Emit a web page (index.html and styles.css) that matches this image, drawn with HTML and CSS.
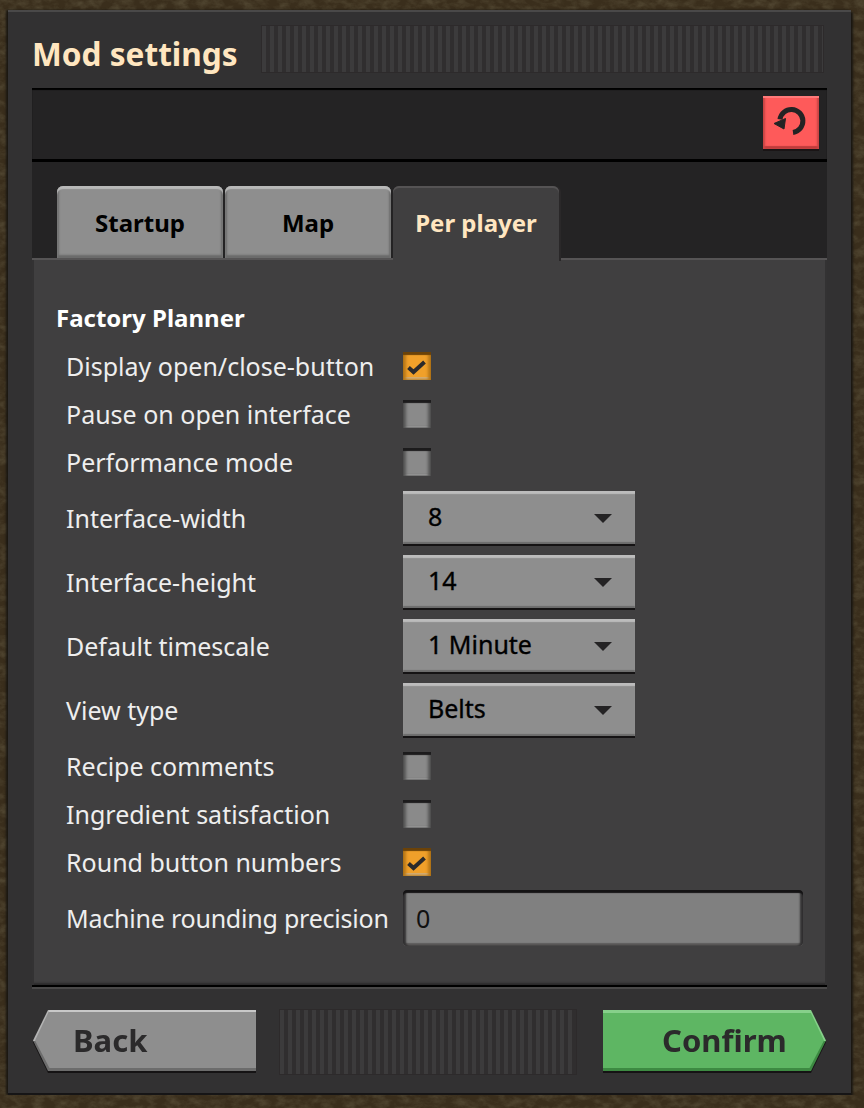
FILE: index.html
```html
<!DOCTYPE html>
<html lang="en">
<head>
  <meta charset="UTF-8" />
  <title>Mod settings</title>
  <link rel="stylesheet" href="styles.css">
</head>
<body>
  <svg class="ground" width="864" height="1108">
    <filter id="dirt">
      <feTurbulence type="fractalNoise" baseFrequency="0.09 0.14" numOctaves="4" seed="7" />
      <feColorMatrix values="0 0 0 0 0.08  0 0 0 0 0.06  0 0 0 0 0.03  2.2 0 0 0 -0.85" />
    </filter>
    <rect width="864" height="1108" filter="url(#dirt)" />
  </svg>

  <div class="window">
    <div class="title-bar">
      <h1>Mod settings</h1>
      <div class="filler"></div>
    </div>

    <div class="panel">
      <div class="toolbar">
        <button class="reset" type="button" aria-label="Reset">
          <svg width="36" height="36" viewBox="0 0 36 36">
            <path d="M20 29.4A11.5 11.5 0 1 0 7 16.4" fill="none" stroke="#242324" stroke-width="5" />
            <path d="M1 20.5L11 26L12.5 15.5Z" fill="#242324" stroke="#242324" stroke-linejoin="round" />
          </svg>
        </button>
      </div>

      <div class="tabs">
        <div class="tab">Startup</div>
        <div class="tab">Map</div>
        <div class="tab active">Per player</div>
      </div>

      <div class="content">
        <h2>Factory Planner</h2>

        <div class="row">
          <label>Display open/close-button</label>
          <span class="check on">
            <svg width="28" height="28" viewBox="0 0 28 28"><path d="M5.5 15.5L10.5 20L21.5 10" fill="none" stroke="#2b2a2b" stroke-width="4" /></svg>
          </span>
        </div>
        <div class="row"><label>Pause on open interface</label><span class="check"></span></div>
        <div class="row"><label>Performance mode</label><span class="check"></span></div>

        <div class="row tall"><label>Interface-width</label><div class="select">8</div></div>
        <div class="row tall"><label>Interface-height</label><div class="select">14</div></div>
        <div class="row tall"><label>Default timescale</label><div class="select">1 Minute</div></div>
        <div class="row tall"><label>View type</label><div class="select">Belts</div></div>

        <div class="row"><label>Recipe comments</label><span class="check"></span></div>
        <div class="row"><label>Ingredient satisfaction</label><span class="check"></span></div>
        <div class="row">
          <label>Round button numbers</label>
          <span class="check on">
            <svg width="28" height="28" viewBox="0 0 28 28"><path d="M5.5 15.5L10.5 20L21.5 10" fill="none" stroke="#2b2a2b" stroke-width="4" /></svg>
          </span>
        </div>
        <div class="row tall"><label class="long">Machine rounding precision</label><div class="textfield">0</div></div>
      </div>
    </div>

    <div class="footer">
      <div class="nav-shadow"><button class="nav back" type="button">Back</button></div>
      <div class="filler"></div>
      <div class="nav-shadow"><button class="nav confirm" type="button">Confirm</button></div>
    </div>
  </div>
</body>
</html>
```

FILE: styles.css
```css
body {
  margin: 0;
  background: #3a2e1c;
  font-family: 'Noto Sans', 'Roboto', sans-serif;
  overflow: hidden;
}

.ground {
  position: absolute;
  left: 0;
  top: 0;
}

.window {
  position: relative;
  box-sizing: border-box;
  width: 843px;
  height: 1085px;
  margin: 10px 0 0 8px;
  background: #323132;
  box-shadow: inset 0 2px 0 #4a4949, inset 0 -2px 0 #161516, -2px 0 2px #1a1712, 2px 2px 2px #1a1712;
  display: flex;
  flex-direction: column;
}

.title-bar {
  height: 78px;
  padding: 16px 28px 0 24px;
  box-sizing: border-box;
  display: flex;
  gap: 25px;
}

h1 {
  margin: 0;
  width: 205px;
  font-size: 31.6px;
  line-height: 56px;
  font-weight: 700;
  color: #ffe6c0;
  white-space: nowrap;
}

.filler {
  flex: 1;
  height: 46px;
  background: repeating-linear-gradient(90deg, #3c3b3c 0 4px, #302e2f 4px 8px);
  box-shadow: 0 0 0 1px #2d2a2b;
}

.panel {
  width: 795px;
  margin-left: 24px;
  height: 897px;
  box-shadow: 0 2px 0 #000, 0 4px 0 #4a4949;
}

.toolbar {
  height: 74px;
  box-sizing: border-box;
  background: #242324;
  box-shadow: inset 0 2px 1px #000, inset 0 -3px 0 #000;
  display: flex;
  justify-content: flex-end;
  padding: 8px 8px 0 0;
}

.reset {
  width: 56px;
  height: 53px;
  padding: 0 0 3px;
  border: 0;
  background: #fe5a5a;
  box-shadow: inset 0 2px 0 #ff7a7a, inset 2px 0 2px #c84444, inset -2px 0 2px #c84444, inset 0 -3px 1px #c03c3c, 0 2px 0 #1a1516;
  display: flex;
  align-items: center;
  justify-content: center;
}

.tabs {
  height: 96px;
  box-sizing: border-box;
  background: #242324;
  padding: 24px 0 0 25px;
  display: flex;
  align-items: flex-end;
  gap: 2px;
}

.tab {
  width: 166px;
  height: 72px;
  box-sizing: border-box;
  border-radius: 6px 6px 0 0;
  background: #8e8e8e;
  box-shadow: inset 0 3px 1px #b8b8b8, inset 2px 0 2px #6e6e6e, inset -2px 0 2px #6e6e6e, inset 0 -3px 2px #6a6a6a;
  font-size: 24px;
  font-weight: 700;
  color: #000;
  display: flex;
  align-items: center;
  justify-content: center;
}

.tab.active {
  margin-bottom: -3px;
  height: 75px;
  padding-bottom: 3px;
  background: #403f40;
  color: #ffe6c0;
  box-shadow: inset 0 2px 0 #555354, 2px 0 0 #2a2829;
  position: relative;
  z-index: 1;
}

.content {
  box-sizing: border-box;
  height: 727px;
  background: #403f40;
  box-shadow: inset 0 2px 0 #565455, inset 2px 0 0 #333233, inset -2px 0 0 #333233, inset 0 -2px 2px #2b2a2b;
  padding: 38px 24px 0 24px;
}

h2 {
  margin: 0;
  height: 46px;
  line-height: 44px;
  font-size: 24px;
  font-weight: 700;
  color: #fff;
}

.row {
  height: 48px;
  display: flex;
  align-items: center;
  padding-left: 10px;
}

.row.tall {
  height: 64px;
  padding-bottom: 2px;
  margin-bottom: -2px;
}

label {
  width: 337px;
  font-size: 25px;
  color: #eeeeee;
  white-space: nowrap;
}

label.long {
  letter-spacing: -0.22px;
}

.check {
  width: 28px;
  height: 28px;
  background: #8a8a8a;
  box-shadow: inset 0 3px 1px #1c1b1c, inset 3px 0 3px #555, inset -3px 0 3px #555, inset 0 -2px 0 #a8a8a8;
}

.check svg {
  display: block;
}

.check.on {
  background: #f0a02a;
  box-shadow: inset 0 3px 1px #6b4208, inset 3px 0 3px #b87818, inset -3px 0 3px #b87818, inset 0 -3px 0 #d4b078;
}

.select {
  position: relative;
  box-sizing: border-box;
  width: 232px;
  height: 53px;
  margin-top: -1px;
  padding: 0 0 3px 25px;
  background: #8e8e8e;
  box-shadow: inset 0 3px 1px #bcbcbc, inset 0 -2px 1px #6c6c6c, 0 2px 0 #151314;
  font-size: 25px;
  -webkit-text-stroke: 0.35px #000;
  color: #000;
  display: flex;
  align-items: center;
}

.select::after {
  content: "";
  position: absolute;
  right: 23px;
  top: 23px;
  width: 0;
  height: 0;
  border-left: 9px solid transparent;
  border-right: 9px solid transparent;
  border-top: 9px solid #242324;
}

.textfield {
  box-sizing: border-box;
  width: 400px;
  height: 56px;
  padding-left: 13px;
  border-radius: 4px;
  background: #808080;
  box-shadow: inset 0 3px 1px #141314, inset 3px 0 2px #333233, inset -3px 0 2px #333233, inset 0 -3px 1px #5e5c5c;
  font-size: 25px;
  color: #111;
  display: flex;
  align-items: center;
}

.footer {
  height: 110px;
  box-sizing: border-box;
  padding: 25px 25px 0 25px;
  display: flex;
  gap: 24px;
  align-items: flex-start;
}

.footer .filler {
  height: 64px;
  margin-right: 3px;
}

.nav-shadow {
  filter: drop-shadow(0 2px 0 #151314);
}

.nav {
  position: relative;
  isolation: isolate;
  display: flex;
  align-items: center;
  width: 223px;
  height: 61px;
  border: 0;
  padding: 0 0 2px;
  font-family: inherit;
  font-size: 31px;
  font-weight: 700;
  color: #2b2a2b;
}

/* the face sits inside the button so the bevel follows the arrow edge too */
.nav::before {
  content: "";
  position: absolute;
  inset: 0;
  z-index: -1;
}

.back {
  padding-left: 40px;
  background: linear-gradient(#b4b4b4 0 50%, #6c6c6c 50% 100%);
  clip-path: polygon(15px 0, 100% 0, 100% 100%, 15px 100%, 0 50%);
}

.back::before {
  background: linear-gradient(#c8c8c8 0 2px, #8e8e8e 2px);
  clip-path: polygon(16.5px 0, 100% 0, 100% 58px, 16.5px 58px, 2px 50%);
}

.confirm {
  padding-left: 59px;
  background: linear-gradient(#86d08a 0 50%, #3d8a42 50% 100%);
  clip-path: polygon(0 0, 208px 0, 100% 50%, 208px 100%, 0 100%);
}

.confirm::before {
  background: linear-gradient(#86d08a 0 3px, #5eb663 3px);
  clip-path: polygon(0 0, 206.5px 0, 221px 50%, 206.5px 58px, 0 58px);
}
```
